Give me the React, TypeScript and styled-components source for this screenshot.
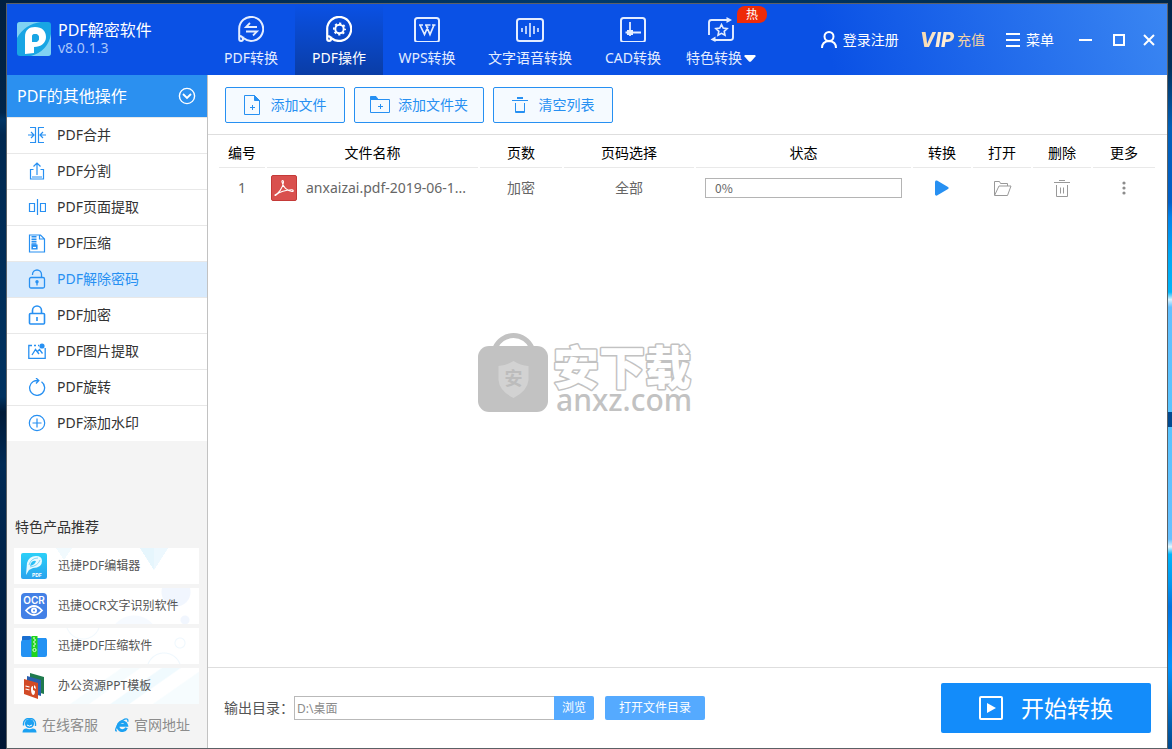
import React from "react";
import styled, { createGlobalStyle, css } from "styled-components";

const BLUE = "#2790f2";
const FONT = '"Noto Sans", "Noto Sans CJK SC", sans-serif';

const GlobalStyle = createGlobalStyle`
  *, *::before, *::after { box-sizing: border-box; }
  body { margin: 0; font-family: ${FONT}; font-size: 14px; line-height: 20px; color: #333; }
  button, input { font: inherit; color: inherit; margin: 0; }
  button { border: 0; padding: 0; background: none; cursor: pointer; }
  a { color: inherit; text-decoration: none; }
  ul { list-style: none; margin: 0; padding: 0; }
  h1, h2, p { margin: 0; font-weight: 400; }
  svg { display: block; flex: none; }
`;

/* ---------- desktop and window ---------- */

const Desktop = styled.div`
  min-height: 100vh;
  padding: 3px 4px 0 6px;
  display: flex;
  background:
    linear-gradient(90deg, #00203f, #003a6c 50%, #002747) top / 100% 3px no-repeat,
    linear-gradient(180deg, #001f40 0, #00254a 15%, #003464 16%, #002850 18%, #003260 53%, #001a38 55%, #002a55 62%, #001534 100%) left / 6px 100% no-repeat,
    linear-gradient(180deg, #00254a 0, #00305c 9%, #0060b8 17%, #0060c8 27%, #0084ec 29%, #00a8f4 34%, #00b4f8 39%, #d8f4ff 40%, #62c0ff 41%, #58c4ff 55%, #004a90 55%, #004a90 57%, #58c4ff 57%, #66c0ff 72%, #e4f8ff 73%, #00b4fa 74%, #0098f0 78%, #0074e0 81%, #0094ff 89%, #00488c 100%) right / 4px 100% no-repeat,
    #002747;
`;

const Window = styled.div`
  position: relative;
  flex: 1;
  min-width: 0;
  display: flex;
  flex-direction: column;
  border: 1px solid #5c6166;
  background: #fff;
`;

const Header = styled.header`
  display: flex;
  height: 71px;
  background: linear-gradient(72deg, #0a51e5 0, #0a51e5 70%, #3a86f2 100%);
  color: #fff;
`;

const Brand = styled.div`
  width: 200px;
  flex: none;
  display: flex;
  gap: 7px;
  padding: 18px 0 0 10px;
`;

const BrandName = styled.h1`
  font-size: 16px;
  line-height: 16px;
`;

const Version = styled.p`
  font-size: 14px;
  line-height: 20px;
  color: #a9c6fa;
`;

const Tabs = styled.nav`
  display: flex;
`;

const Tab = styled.button<{ $active?: boolean; $wide?: boolean }>`
  position: relative;
  width: ${(p) => (p.$wide ? 118 : 88)}px;
  height: 71px;
  display: flex;
  flex-direction: column;
  align-items: center;
  gap: 6px;
  padding-top: 12px;
  white-space: nowrap;
  color: ${(p) => (p.$active ? "#fff" : "#e4edff")};
  background: ${(p) => (p.$active ? "linear-gradient(180deg, #0a51e5, #0a3da6)" : "none")};
`;

const TabLabel = styled.span`
  display: flex;
  align-items: center;
  gap: 2px;
`;

const Badge = styled.span`
  position: absolute;
  top: 2px;
  right: -2px;
  width: 30px;
  height: 17px;
  border-radius: 8px 8px 8px 0;
  background: #ee2b08;
  color: #fff;
  font-size: 12px;
  line-height: 17px;
  text-align: center;
`;

const HeaderTools = styled.div`
  margin-left: auto;
  height: 71px;
  display: flex;
  align-items: center;
  padding-right: 12px;
  gap: 21px;
`;

const Tool = styled.button`
  display: flex;
  align-items: center;
  gap: 6px;
  white-space: nowrap;
`;

const VipTool = styled(Tool)`
  gap: 1px;
  color: #f3d3a4;
`;

const Vip = styled.b`
  font-family: Inter, sans-serif;
  font-size: 20px;
  font-weight: 800;
  font-style: italic;
  padding-right: 2px;
  background: linear-gradient(100deg, #f7d9ae 10%, #fff0dc 60%, #ffe0b0);
  background-clip: text;
  color: transparent;
`;

const WindowButtons = styled.div`
  display: flex;
  align-items: center;
  gap: 18px;
  margin-left: 4px;
`;

const Body = styled.div`
  flex: 1;
  display: flex;
  min-height: 0;
`;

/* ---------- sidebar ---------- */

const Sidebar = styled.aside`
  width: 201px;
  flex: none;
  display: flex;
  flex-direction: column;
  border-right: 1px solid #c2c2c2;
  background: #f4f4f4;
`;

const SideTitle = styled.button`
  height: 42px;
  display: flex;
  align-items: center;
  justify-content: space-between;
  padding: 0 11px 0 10px;
  background: #2b90f0;
  color: #fff;
  font-size: 16px;
  line-height: 24px;
`;

const SideItem = styled.button<{ $active?: boolean }>`
  width: 100%;
  height: 36px;
  display: flex;
  align-items: center;
  gap: 11px;
  padding: 0 0 1px 21px;
  border-top: 1px solid #e8e8e8;
  background: ${(p) => (p.$active ? "#d7eafd" : "#fff")};
  color: ${(p) => (p.$active ? BLUE : "#333")};
`;

const Tint = styled.span`
  color: ${BLUE};
`;

const Promo = styled.section`
  margin-top: auto;
  padding: 0 8px 13px 7px;
`;

const PromoTitle = styled.h2`
  font-size: 14px;
  line-height: 20px;
  padding: 0 0 11px 1px;
`;

const PromoList = styled.ul`
  display: flex;
  flex-direction: column;
  gap: 4px;
`;

const PromoCard = styled.a<{ $art: string }>`
  height: 36px;
  display: flex;
  align-items: center;
  gap: 11px;
  padding-left: 7px;
  font-size: 12px;
  color: #555;
  background: ${(p) => p.$art}, #fff;
`;

const SideLinks = styled.div`
  display: flex;
  gap: 17px;
  padding: 11px 0 0 8px;
  color: #8c8c8c;
`;

const SideLink = styled.a`
  display: flex;
  align-items: center;
  gap: 5px;
`;

/* ---------- main area ---------- */

const Main = styled.main`
  flex: 1;
  min-width: 0;
  display: flex;
  flex-direction: column;
`;

const Toolbar = styled.div`
  display: flex;
  gap: 9px;
  padding: 12px 17px 11px;
  border-bottom: 1px solid #dedede;
`;

const ToolbarButton = styled.button<{ $wide?: boolean }>`
  width: ${(p) => (p.$wide ? 130 : 120)}px;
  height: 36px;
  display: flex;
  align-items: center;
  justify-content: center;
  gap: ${(p) => (p.$wide ? 8 : 11)}px;
  border: 1px solid ${BLUE};
  border-radius: 2px;
  background: #f5faff;
  color: ${BLUE};
`;

const TableArea = styled.div`
  flex: 1;
  padding: 0 10px 0 9px;
`;

const FileTable = styled.table`
  width: 100%;
  table-layout: fixed;
  border-collapse: separate;
  border-spacing: 2px 0;
  text-align: center;

  th {
    height: 33px;
    padding: 3px 0 0;
    border-bottom: 1px solid #e9e9e9;
    color: #000;
    font-weight: 400;
    white-space: nowrap;
  }
  td {
    height: 40px;
    padding: 0;
    color: #666;
  }
`;

const Col = styled.col<{ $w?: number }>`
  ${(p) => p.$w && css`width: ${p.$w}px;`}
`;

const FileName = styled.div`
  display: flex;
  align-items: center;
  gap: 9px;
  padding-left: 4px;
  white-space: nowrap;
`;

const Progress = styled.div`
  height: 20px;
  margin: 0 9px;
  padding-left: 9px;
  border: 1px solid #b4b4b4;
  font-family: "Noto Sans CJK SC", sans-serif;
  font-size: 12px;
  line-height: 18px;
  text-align: left;
`;

const RowButton = styled.button`
  display: block;
  margin: 0 auto;
  color: #999;
`;

const Footer = styled.footer`
  display: flex;
  align-items: center;
  height: 81px;
  padding: 0 16px;
  border-top: 1px solid #dedede;
`;

const OutputLabel = styled.label`
  white-space: nowrap;
  width: 70px;
  color: #555;
`;

const OutputInput = styled.input`
  width: 260px;
  height: 24px;
  padding: 0 2px;
  border: 1px solid #b9b9b9;
  border-right: 0;
  border-radius: 0;
  background: #fff;
  font-size: 12px;
  color: #8c8c8c;
`;

const SmallButton = styled.button<{ $wide?: boolean }>`
  width: ${(p) => (p.$wide ? 100 : 40)}px;
  height: 24px;
  margin-right: 11px;
  border-radius: ${(p) => (p.$wide ? "2px" : "0 2px 2px 0")};
  background: #55aaff;
  color: #fff;
  font-size: 12px;
`;

const StartButton = styled.button`
  width: 210px;
  height: 50px;
  margin-left: auto;
  display: flex;
  align-items: center;
  justify-content: center;
  gap: 18px;
  border-radius: 2px;
  background: #138cfa;
  color: #fff;
  font-size: 23px;
  line-height: 32px;
`;

const Watermark = styled.div`
  position: absolute;
  inset: 0;
  display: flex;
  align-items: center;
  justify-content: center;
  padding-right: 4px;
  pointer-events: none;
`;

/* ---------- icons ---------- */

type IconProps = { w: number; h?: number; sw?: number; children: React.ReactNode };
const Icon = ({ w, h = w, sw = 1, children }: IconProps) => (
  <svg width={w} height={h} viewBox={`0 0 ${w} ${h}`} fill="none" stroke="currentColor" strokeWidth={sw} aria-hidden="true">
    {children}
  </svg>
);

const Bubble = (
  <path d="M1.200 23V13.500a12 12 0 1 1 4.500 8.800M1.200 23a1.900 1.900 0 0 0 3.800 0c0-1.500-1-2.500-3-3M5 23q-.2-1.500 1.200-1.500" />
);

const tabIcons = {
  convert: (
    <Icon w={26} sw={2}>
      {Bubble}
      <path d="M19 11H8l4-4M8 15.500h11l-4 4" strokeWidth={1.8} />
    </Icon>
  ),
  operate: (
    <Icon w={26} sw={2.2}>
      {Bubble}
      <circle cx="13.500" cy="13" r="4.200" strokeWidth={2} />
      <circle cx="13.500" cy="13" r="5.600" strokeWidth={1.8} strokeDasharray="2.200 2.198" strokeDashoffset="1.100" />
    </Icon>
  ),
  wps: (
    <Icon w={26} sw={2}>
      <rect x="1" y="2" width="24" height="24" rx="2.500" />
      <path d="M5 9h4M6 9l4.500 9.500L14 10.500M11 9h5.500M12 9l4 9.500L20 9M18 9h3.500" strokeWidth={1.7} />
    </Icon>
  ),
  voice: (
    <Icon w={28} h={26} sw={2}>
      <rect x="1" y="3" width="26" height="22" rx="2.500" />
      <path d="M6 12v4M10 10v8M14 7v14M18 10v8M22 12v4" strokeWidth={1.6} />
    </Icon>
  ),
  cad: (
    <Icon w={26} sw={2}>
      <rect x="1" y="2" width="24" height="24" rx="2.500" />
      <path d="M10 6v14M5.500 16.500H21" strokeWidth={1.8} />
      <rect x="7" y="14" width="6" height="5" fill="currentColor" stroke="none" />
    </Icon>
  ),
  special: (
    <Icon w={26} sw={1.9}>
      <path d="M1 19V6.500Q1 4 3.500 4H20M25 9v12.500q0 2.500-2.500 2.500H6" />
      <path d="M18.500 1v6l5.500-3zM7.500 20.500v5.500L2.500 23.500z" fill="currentColor" stroke="none" />
      <path d="m13.500 8.500 1.700 3.600 3.900.5-2.900 2.700.8 3.900-3.500-1.900-3.500 1.900.8-3.900-2.900-2.700 3.900-.5z" strokeWidth={1.6} />
    </Icon>
  ),
};

const sideIcons = {
  merge: (
    <Icon w={18} sw={1.2}>
      <path d="M2 1.500h5.500v15H2M16 1.500h-5.500v15H16M0 9h5.500M3 6l3 3-3 3M18 9h-5.500M15 6l-3 3 3 3" />
    </Icon>
  ),
  split: (
    <Icon w={18} sw={1.2}>
      <path d="M5.500 7.500h-3v9.500h13V7.500h-3M9 13V1M5.500 4.500 9 1l3.500 3.500" />
      <path d="M4 15h10" strokeWidth={2} opacity={0.5} />
    </Icon>
  ),
  extract: (
    <Icon w={18} sw={1.2}>
      <path d="M9.500 1v16M1.500 5.500h5v8h-5zM12.500 5.500h5v8h-5z" />
    </Icon>
  ),
  compress: (
    <Icon w={18} h={19} sw={1.2}>
      <path d="M1.500 1h11l4 4v13h-15zM11.500 1v4h5" />
      <path d="M6 2v9" strokeWidth={5} strokeDasharray="1.600 .8" />
      <path d="M4 11h5v4H4z" fill="currentColor" />
      <path d="M5 13.500h3" stroke="#fff" />
    </Icon>
  ),
  unlock: (
    <Icon w={18} h={20} sw={1.3}>
      <rect x="1.500" y="8.500" width="15" height="10.500" rx="1.500" />
      <path d="M4.500 6V5.500a4.500 4.500 0 0 1 9 0v3M9 13v3.500" />
      <circle cx="9" cy="12.800" r="1.700" fill="currentColor" stroke="none" />
    </Icon>
  ),
  lock: (
    <Icon w={18} h={20} sw={1.6}>
      <rect x="1.500" y="8.500" width="15" height="10.500" rx="1" />
      <path d="M4.500 8.500V5.500a4.500 4.500 0 0 1 9 0v3M9 12v4" />
    </Icon>
  ),
  image: (
    <Icon w={18} sw={1.3}>
      <path d="M11 3.500h-1M8 3.500H6M4 3.500H.8v12.900h16.400V6M4 13l3.500-5.500L11 12M9.500 9.500l2-2 3 4" />
      <circle cx="14" cy="4" r="2.600" fill="currentColor" stroke="none" />
    </Icon>
  ),
  rotate: (
    <Icon w={18} sw={1.3}>
      <path d="M13.500 3.800A7.500 7.500 0 1 1 5.200 3.500Q7 2.400 10.500 2.500M8 0l2.800 2.500L8 5.500" />
    </Icon>
  ),
  plus: (
    <Icon w={18} sw={1.2}>
      <circle cx="9" cy="9" r="7.700" />
      <path d="M9 4.500v9M4.500 9h9" />
    </Icon>
  ),
};

const AddFileIcon = (
  <Icon w={16} h={20}>
    <path d="M10.500.5H.5v19h15v-14zM6 12.500h5M8.500 10v5" />
    <path d="M10.500.5v5h5z" fill="currentColor" />
  </Icon>
);
const AddFolderIcon = (
  <Icon w={20} h={18}>
    <path d="M.5 3.500h19v13H.5zM8 10.500h5M10.500 8v5" />
    <path d="M.5.5H6l2 3H.5z" fill="currentColor" />
  </Icon>
);
const ClearIcon = (
  <Icon w={16} h={16}>
    <path d="M0 3.500h16M3.500 6v9.500h9V6M3 14.500h10" />
    <path d="M5 1h6" strokeWidth={2} />
  </Icon>
);

const Logo = () => (
  <svg width="34" height="34" viewBox="0 0 34 34" aria-hidden="true">
    <rect width="34" height="34" rx="3" fill="#18a5e4" />
    <path d="M3 0H24Q8 2 0 16V3Q0 0 3 0ZM34 12v19q0 3-3 3H14Q31 29 34 12Z" fill="#7fd2f3" />
    <path d="M8 32V15C8 8 12 5 18 5c7 0 11 4 11 10s-5 10-12 10v6zM18 12c-2 0-3 1-3 3v5h3c3 0 4-2 4-4s-1-4-4-4z" fill="#fff" fillRule="evenodd" />
    <path d="M18 12c-2 0-3 1-3 3v5h3c3 0 4-2 4-4s-1-4-4-4z" fill="#18a5e4" />
  </svg>
);

const ProductEditor = () => (
  <svg width="26" height="26" viewBox="0 0 26 26" aria-hidden="true">
    <defs>
      <linearGradient id="editor" x2="0" y2="1">
        <stop stopColor="#2bd0f8" />
        <stop offset="1" stopColor="#2aa3ee" />
      </linearGradient>
    </defs>
    <rect width="26" height="26" rx="2" fill="url(#editor)" />
    <path d="M5 22 6 10Q8 3 15 3q6 0 6 5 0 7-9 7l-4 2zM9 13l1-3q2-3 5-2-1 4-6 5z" fill="#e9faff" fillRule="evenodd" />
    <path d="M8 12q2-7 9-7M9 14q8-1 10-7" fill="none" stroke="#38bdf2" strokeWidth=".6" />
    <text x="11" y="23.500" fontSize="5" fontWeight="700" fontFamily="Inter" fill="#fff">PDF</text>
  </svg>
);
const ProductOcr = () => (
  <svg width="26" height="26" viewBox="0 0 26 26" aria-hidden="true">
    <rect width="26" height="26" rx="4" fill="#4380e6" />
    <text x="13" y="10.500" fontSize="10" fontWeight="600" fontFamily="Inter" fill="#fff" textAnchor="middle">OCR</text>
    <path d="M5 17.500q8-9 16 0-8 9-16 0z" fill="none" stroke="#fff" strokeWidth="1.800" />
    <circle cx="13" cy="17.500" r="3" fill="#fff" />
    <circle cx="13" cy="17.500" r="1" fill="#4380e6" />
  </svg>
);
const ProductZip = () => (
  <svg width="26" height="26" viewBox="0 0 26 26" aria-hidden="true">
    <path d="M2 3h7l3 2h13v8H1V4q0-1 1-1z" fill="#1a6fd0" />
    <path d="M0 9q0-2 2-2h6l3-2h13q2 0 2 2v15q0 2-2 2H2q-2 0-2-2z" fill="#2392f3" />
    <path d="M10.500 3h6v21h-6z" fill="#20d51c" />
    <path d="M12 5h2M13 7h2M12 9h2M13 11h2M12 13h2" stroke="#fff" strokeWidth="1.200" />
    <circle cx="13.500" cy="17" r="1.600" fill="none" stroke="#d8ffd8" />
  </svg>
);
const ProductPpt = () => (
  <svg width="26" height="26" viewBox="0 0 26 26" aria-hidden="true">
    <path d="m9 0 14 4v17L9 17z" fill="#1f7a4d" />
    <path d="m6 3 14 4v16L6 19z" fill="#2b5fae" />
    <path d="m3 6 14 4v16L3 21z" fill="#d24a26" />
    <path d="m4.500 13 4 1M4.500 16l4 1" stroke="#fff" strokeWidth="1.200" />
    <path d="M10 16q0-3 2-3v4l2 1q0 4-2 4-2-1-2-6zM13 12q2 1 2 4l-2-1z" fill="#fff" />
  </svg>
);

const Art = {
  triangles:
    "linear-gradient(to bottom right, #edf8fe 50%, transparent 51%) 140px 0 / 14px 22px no-repeat, linear-gradient(to bottom left, #e6f6fd 50%, transparent 51%) 126px 0 / 14px 22px no-repeat, linear-gradient(to bottom right, #f1fafe 50%, transparent 51%) 50px 0 / 8px 12px no-repeat, linear-gradient(to bottom left, #f1fafe 50%, transparent 51%) 42px 0 / 8px 12px no-repeat",
  dots:
    "radial-gradient(circle at 162px 4px, #f1f6fe 14px, transparent 15px), radial-gradient(circle at 171px 32px, #f1f6fe 4px, transparent 5px), radial-gradient(circle at 120px 52px, #f6faff 24px, transparent 25px)",
  rings:
    "radial-gradient(circle at 166px 15px, transparent 4px, #eef7fd 5px, transparent 6px), radial-gradient(circle at 150px 42px, transparent 16px, #eef7fd 17px, transparent 18px), radial-gradient(circle at 69px -6px, transparent 16px, #f1f8fd 17px, transparent 18px)",
  stripes:
    "linear-gradient(145deg, transparent 45%, #f6fcfe 46%, #f6fcfe 53%, transparent 54%, transparent 62%, #f0fafe 63%, #f0fafe 70%, transparent 71%, transparent 80%, #f6fcfe 81%)",
};

/* ---------- data ---------- */

const sideItems: { icon: keyof typeof sideIcons; label: string }[] = [
  { icon: "merge", label: "PDF合并" },
  { icon: "split", label: "PDF分割" },
  { icon: "extract", label: "PDF页面提取" },
  { icon: "compress", label: "PDF压缩" },
  { icon: "unlock", label: "PDF解除密码" },
  { icon: "lock", label: "PDF加密" },
  { icon: "image", label: "PDF图片提取" },
  { icon: "rotate", label: "PDF旋转" },
  { icon: "plus", label: "PDF添加水印" },
];

const products = [
  { Logo: ProductEditor, art: Art.triangles, label: "迅捷PDF编辑器" },
  { Logo: ProductOcr, art: Art.dots, label: "迅捷OCR文字识别软件" },
  { Logo: ProductZip, art: Art.rings, label: "迅捷PDF压缩软件" },
  { Logo: ProductPpt, art: Art.stripes, label: "办公资源PPT模板" },
];

const columns: { label: string; w?: number }[] = [
  { label: "编号", w: 46 },
  { label: "文件名称", w: 211 },
  { label: "页数", w: 82 },
  { label: "页码选择", w: 130 },
  { label: "状态" },
  { label: "转换", w: 58 },
  { label: "打开", w: 58 },
  { label: "删除", w: 58 },
  { label: "更多", w: 62 },
];

export default function App() {
  return (
    <Desktop>
      <GlobalStyle />
      <Window>
        <Header>
          <Brand>
            <Logo />
            <div>
              <BrandName>PDF解密软件</BrandName>
              <Version>v8.0.1.3</Version>
            </div>
          </Brand>
          <Tabs>
            <Tab>{tabIcons.convert}<TabLabel>PDF转换</TabLabel></Tab>
            <Tab $active>{tabIcons.operate}<TabLabel>PDF操作</TabLabel></Tab>
            <Tab>{tabIcons.wps}<TabLabel>WPS转换</TabLabel></Tab>
            <Tab $wide>{tabIcons.voice}<TabLabel>文字语音转换</TabLabel></Tab>
            <Tab>{tabIcons.cad}<TabLabel>CAD转换</TabLabel></Tab>
            <Tab>
              {tabIcons.special}
              <TabLabel>
                特色转换
                <svg width="12" height="7" viewBox="0 0 12 7" aria-hidden="true">
                  <path d="M1 0h10q1 .5.5 1.500L7 6.500q-1 .7-2 0L.5 1.500Q0 .5 1 0z" fill="#fff" />
                </svg>
              </TabLabel>
              <Badge>热</Badge>
            </Tab>
          </Tabs>
          <HeaderTools>
            <Tool>
              <Icon w={16} h={17} sw={2}>
                <circle cx="8" cy="5.500" r="4.500" />
                <path d="M1 17q0-6.500 7-7 7 .5 7 7" />
              </Icon>
              登录注册
            </Tool>
            <VipTool><Vip>VIP</Vip>充值</VipTool>
            <Tool>
              <Icon w={14} h={14} sw={2}><path d="M0 1h14M0 7h14M0 13h14" /></Icon>
              菜单
            </Tool>
            <WindowButtons>
              <button aria-label="最小化"><Icon w={16} h={12} sw={2}><path d="M0 6h13" /></Icon></button>
              <button aria-label="最大化"><Icon w={12} sw={2}><path d="M1 1h10v10H1z" /></Icon></button>
              <button aria-label="关闭"><Icon w={12} sw={2}><path d="m1 1 10 10M11 1 1 11" /></Icon></button>
            </WindowButtons>
          </HeaderTools>
        </Header>

        <Body>
          <Sidebar>
            <SideTitle>
              PDF的其他操作
              <Icon w={18} sw={1.4}><circle cx="9" cy="9" r="7.600" /><path d="m5 7 4 4 4-4" strokeWidth={1.8} /></Icon>
            </SideTitle>
            <ul>
              {sideItems.map((item) => (
                <li key={item.label}>
                  <SideItem $active={item.icon === "unlock"}>
                    <Tint>{sideIcons[item.icon]}</Tint>
                    {item.label}
                  </SideItem>
                </li>
              ))}
            </ul>
            <Promo>
              <PromoTitle>特色产品推荐</PromoTitle>
              <PromoList>
                {products.map((p) => (
                  <li key={p.label}>
                    <PromoCard href="#" $art={p.art}><p.Logo />{p.label}</PromoCard>
                  </li>
                ))}
              </PromoList>
              <SideLinks>
                <SideLink href="#">
                  <svg width="15" height="15" viewBox="0 0 15 15" fill="#1ba1f2" aria-hidden="true">
                    <circle cx="7.500" cy="5.500" r="4.600" />
                    <path d="M1.500 7.500V5.500a6 5.200 0 0 1 12 0V8" fill="none" stroke="#1ba1f2" strokeWidth="1.400" />
                    <path d="M.5 14.500q0-4 4-4 3 1.500 6 0 4 0 4 4z" />
                    <path d="M5 7q2.500 2.200 5 0" fill="none" stroke="#fff" />
                  </svg>
                  在线客服
                </SideLink>
                <SideLink href="#">
                  <svg width="14" height="14" viewBox="0 0 14 14" fill="none" stroke="#1ba1f2" aria-hidden="true">
                    <path d="M11.500 9.800A4.400 4.400 0 1 1 11.700 7.300H4" strokeWidth="2.800" />
                    <path d="M2 12.800Q-.2 13.500 1.200 10q2.500-6 8.500-8.800 4-1 3 2.500" strokeWidth="1.300" />
                  </svg>
                  官网地址
                </SideLink>
              </SideLinks>
            </Promo>
          </Sidebar>

          <Main>
            <Toolbar>
              <ToolbarButton>{AddFileIcon}添加文件</ToolbarButton>
              <ToolbarButton $wide>{AddFolderIcon}添加文件夹</ToolbarButton>
              <ToolbarButton>{ClearIcon}清空列表</ToolbarButton>
            </Toolbar>
            <TableArea>
              <FileTable>
                <colgroup>
                  {columns.map((c) => <Col key={c.label} $w={c.w} />)}
                </colgroup>
                <thead>
                  <tr>{columns.map((c) => <th key={c.label} scope="col">{c.label}</th>)}</tr>
                </thead>
                <tbody>
                  <tr>
                    <td>1</td>
                    <td>
                      <FileName>
                        <svg width="26" height="26" viewBox="0 0 26 26" aria-hidden="true">
                          <rect x=".5" y=".5" width="25" height="25" rx="1.500" fill="#d9504e" stroke="#c43a38" />
                          <path d="M4 20c3-1 8-7 8.500-13 0-2-2-2-1.500 0 1 5 5 9 10 9.500 2 0 1.500-1.800-.5-1.700C15 15 8 17 5.500 19.500 4.500 20.500 4 21 4 20z" fill="none" stroke="#fff" strokeWidth="1.100" />
                        </svg>
                        anxaizai.pdf-2019-06-1...
                      </FileName>
                    </td>
                    <td>加密</td>
                    <td>全部</td>
                    <td><Progress role="progressbar" aria-valuenow={0} aria-label="状态">0%</Progress></td>
                    <td>
                      <RowButton aria-label="转换">
                        <svg width="14" height="16" viewBox="0 0 14 16" aria-hidden="true"><path d="M0 1.500Q.5 0 2 .500L13 7q1.300 1 0 2L2 15.500Q.5 16 0 14.500z" fill={BLUE} /></svg>
                      </RowButton>
                    </td>
                    <td>
                      <RowButton aria-label="打开">
                        <Icon w={19} h={15}><path d="M1.500 14V.5h5l1 2h7V5M1.500 14.500 6 5h12l-3.500 9.500z" /></Icon>
                      </RowButton>
                    </td>
                    <td>
                      <RowButton aria-label="删除">
                        <Icon w={16} h={17}><path d="M5 .5h6M0 2.500h16M2.500 5v11.500h11V5M6.500 7.500v6M9.500 7.500v6" /></Icon>
                      </RowButton>
                    </td>
                    <td>
                      <RowButton aria-label="更多">
                        <svg width="4" height="14" viewBox="0 0 4 14" fill="#8c8c8c" aria-hidden="true">
                          <circle cx="2" cy="2" r="1.600" /><circle cx="2" cy="7" r="1.600" /><circle cx="2" cy="12" r="1.600" />
                        </svg>
                      </RowButton>
                    </td>
                  </tr>
                </tbody>
              </FileTable>
            </TableArea>
            <Footer>
              <OutputLabel htmlFor="output">输出目录：</OutputLabel>
              <OutputInput id="output" defaultValue="D:\桌面" />
              <SmallButton>浏览</SmallButton>
              <SmallButton $wide>打开文件目录</SmallButton>
              <StartButton>
                <Icon w={24} sw={2}>
                  <rect x="1" y="1" width="22" height="22" rx="1" />
                  <path d="M8 7v10l9-5z" fill="currentColor" stroke="none" />
                </Icon>
                开始转换
              </StartButton>
            </Footer>
          </Main>
        </Body>

        <Watermark>
          <svg width="216" height="90" viewBox="0 0 216 90" aria-hidden="true">
            <path d="M18 17a20 20 0 0 1 37 0" fill="none" stroke="#c2c2c2" strokeWidth="5" />
            <rect x="1" y="15" width="70" height="66" rx="11" fill="#c2c2c2" />
            <path d="M36.500 30q7 4.500 15 5v14q-1 11-15 18-14-7-15-18V35q8-.5 15-5z" fill="#d2d2d2" />
            <text x="36.500" y="54" fontSize="18" fontWeight="700" fontFamily="Noto Sans CJK SC" fill="#bcbcbc" textAnchor="middle">安</text>
            <text x="76" y="53" fontSize="46" fontWeight="900" fontFamily="Noto Sans CJK SC" fill="#fff" stroke="#c2c2c2" strokeWidth="3" strokeLinejoin="round" paintOrder="stroke">安下载</text>
            <text x="79" y="80" fontSize="30" fontWeight="500" fontFamily="Noto Sans" fill="#c2c2c2">anxz.com</text>
          </svg>
        </Watermark>
      </Window>
    </Desktop>
  );
}
